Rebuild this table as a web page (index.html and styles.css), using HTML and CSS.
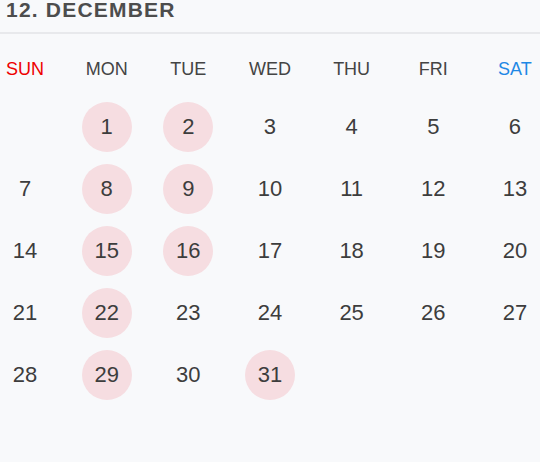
FILE: index.html
```html
<!DOCTYPE html>
<html>
<head>
<meta charset="utf-8">
<link rel="stylesheet" href="styles.css">
</head>
<body>
<div class="cal">
  <div class="title">12. DECEMBER</div>
  <div class="grid weekdays">
    <div class="wd sun">SUN</div>
    <div class="wd">MON</div>
    <div class="wd">TUE</div>
    <div class="wd">WED</div>
    <div class="wd">THU</div>
    <div class="wd">FRI</div>
    <div class="wd sat">SAT</div>
  </div>
  <div class="grid days">
    <div class="d"></div>
    <div class="d on">1</div>
    <div class="d on">2</div>
    <div class="d">3</div>
    <div class="d">4</div>
    <div class="d">5</div>
    <div class="d">6</div>
    <div class="d">7</div>
    <div class="d on">8</div>
    <div class="d on">9</div>
    <div class="d">10</div>
    <div class="d">11</div>
    <div class="d">12</div>
    <div class="d">13</div>
    <div class="d">14</div>
    <div class="d on">15</div>
    <div class="d on">16</div>
    <div class="d">17</div>
    <div class="d">18</div>
    <div class="d">19</div>
    <div class="d">20</div>
    <div class="d">21</div>
    <div class="d on">22</div>
    <div class="d">23</div>
    <div class="d">24</div>
    <div class="d">25</div>
    <div class="d">26</div>
    <div class="d">27</div>
    <div class="d">28</div>
    <div class="d on">29</div>
    <div class="d">30</div>
    <div class="d on">31</div>
  </div>
</div>
</body>
</html>
```
FILE: styles.css
```css
html, body {
  margin: 0;
  padding: 0;
  background: #f8f9fb;
  font-family: "Liberation Sans", Arial, sans-serif;
}
.cal {
  width: 540px;
}
.title {
  font-size: 21px;
  line-height: 20px;
  font-weight: bold;
  color: #4d4d4d;
  letter-spacing: 1.2px;
  padding: 0 0 12px 6px;
  border-bottom: 2px solid #e8e9ec;
}
.grid {
  display: grid;
  grid-template-columns: repeat(7, 50px);
  justify-content: space-between;
}
.weekdays {
  margin-top: 26px;
}
.wd {
  text-align: center;
  font-size: 18px;
  line-height: 18px;
  color: #444;
}
.wd.sun { color: #ee0000; }
.wd.sat { color: #1e88e5; }
.days {
  margin-top: 24px;
  row-gap: 12px;
}
.d {
  width: 50px;
  height: 50px;
  border-radius: 50%;
  text-align: center;
  line-height: 50px;
  font-size: 22px;
  color: #3d3d3d;
}
.d.on {
  background: #f6dde1;
}
```
